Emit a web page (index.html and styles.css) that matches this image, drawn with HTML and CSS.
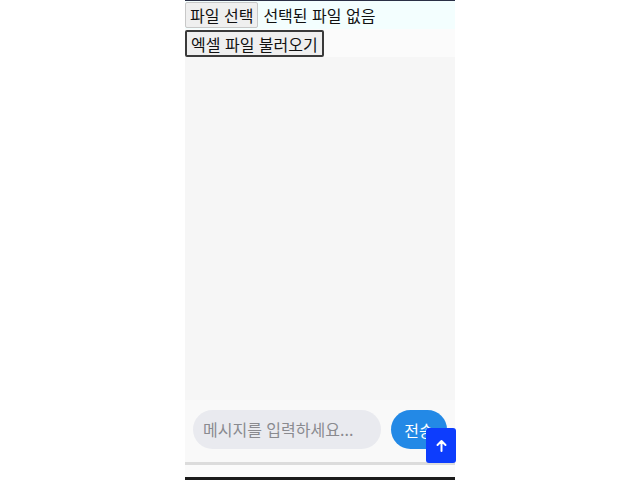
FILE: index.html
```html
<!DOCTYPE html>
<html lang="ko">
<head>
<meta charset="utf-8">
<title>Chat</title>
<link rel="stylesheet" href="styles.css">
</head>
<body>
<div class="app">
  <div class="file-row">
    <span class="file-btn">파일 선택</span>
    <span class="file-name">선택된 파일 없음</span>
  </div>
  <div class="load-row">
    <button class="load-btn">엑셀 파일 불러오기</button>
  </div>
  <div class="chat"></div>
  <div class="input-bar">
    <div class="msg-input">메시지를 입력하세요...</div>
    <button class="send-btn">전송</button>
  </div>
  <div class="bar-shadow"></div>
  <div class="bottom-space"></div>
  <div class="bottom-line"></div>
  <button class="top-btn" aria-label="위로">
    <svg width="11" height="13" viewBox="0 0 11 13"><path d="M5.5 12V2M1.5 6L5.5 2l4 4" fill="none" stroke="#fff" stroke-width="2" stroke-linecap="round" stroke-linejoin="round"/></svg>
  </button>
</div>
</body>
</html>
```

FILE: styles.css
```css
html, body {
  margin: 0;
  padding: 0;
  background: #ffffff;
}
body {
  font-family: "Noto Sans CJK KR", "Noto Sans", sans-serif;
}
.app {
  position: relative;
  width: 270px;
  height: 480px;
  margin: 0 auto;
  display: flex;
  flex-direction: column;
  box-sizing: border-box;
  border-top: 1px solid #2a2f45;
  background: #f7f7f7;
}
.file-row {
  display: flex;
  align-items: center;
  gap: 5px;
  height: 28px;
  background: #f3fefe;
}
.file-btn {
  font-size: 16px;
  line-height: 20px;
  padding: 2px 4px;
  background: #efefef;
  border: 1px solid #c8c8c8;
  border-radius: 2px;
  color: #111;
}
.file-name {
  font-size: 16px;
  color: #111;
}
.load-row {
  display: flex;
  padding-top: 1px;
  background: #fbfbfb;
}
.load-btn {
  font-family: inherit;
  font-size: 16px;
  line-height: 20px;
  padding: 1px 4px;
  background: #efefef;
  border: 2px solid #3a3a3a;
  border-radius: 2px;
  color: #111;
  height: 27px;
}
.chat {
  flex: 1;
  background: #f6f6f6;
}
.input-bar {
  display: flex;
  gap: 10px;
  padding: 10px 8px 13px;
  background: #f9f9f9;
}
.msg-input {
  flex: 1;
  height: 39px;
  border-radius: 20px;
  background: #e9eaef;
  color: #8a8a8f;
  font-size: 16px;
  line-height: 39px;
  padding-left: 10px;
}
.send-btn {
  width: 56px;
  height: 39px;
  border: none;
  border-radius: 20px;
  background: #2389e6;
  color: #ffffff;
  font-family: inherit;
  font-size: 16px;
  padding: 0;
}
.bar-shadow {
  height: 3px;
  background: #dcdcdc;
}
.bottom-space {
  height: 12px;
  background: #fbfbfb;
}
.bottom-line {
  height: 3px;
  background: #1b1b1b;
}
.top-btn {
  position: absolute;
  top: 427px;
  right: -1px;
  width: 30px;
  height: 35px;
  border: none;
  border-radius: 3px;
  background: #0d3dfd;
  display: flex;
  align-items: center;
  justify-content: center;
  padding: 0;
}
```
